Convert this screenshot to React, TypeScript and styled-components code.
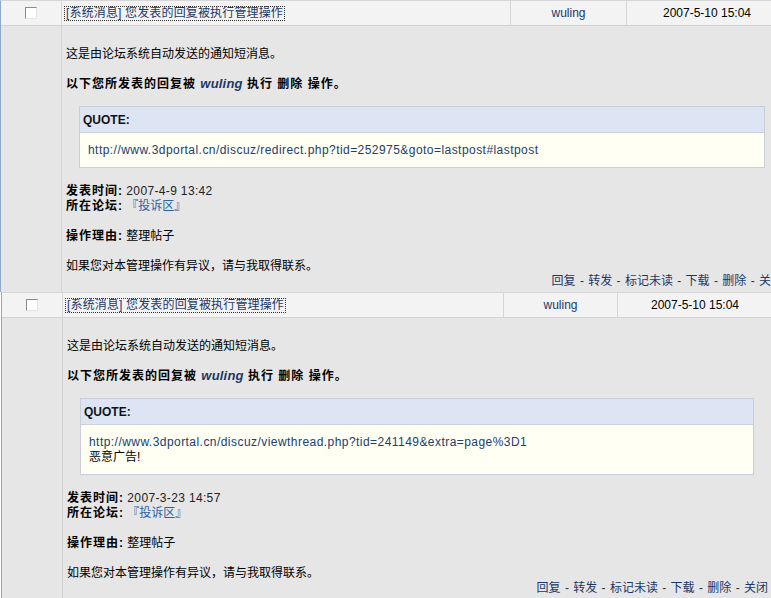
import React from 'react'
import styled, { createGlobalStyle } from 'styled-components'

const GlobalStyle = createGlobalStyle`
  html, body {
    margin: 0;
    padding: 0;
    overflow: hidden;
    background: #ffffff;
  }
  body {
    font-family: "Liberation Sans", "Noto Sans CJK SC", sans-serif;
    font-size: 12px;
    line-height: 15px;
    color: #000;
  }
`

const Table = styled.div<{ $width: number; $offset: number; $cols: string }>`
  display: grid;
  grid-template-columns: ${(p) => p.$cols};
  width: ${(p) => p.$width}px;
  margin-left: ${(p) => p.$offset}px;
  border-left: 1px solid #8fa8cc;
  border-top: 1px solid #d6d6d6;
  box-sizing: border-box;
  background: #e6e6e6;
`

const HeadCell = styled.div<{ $align?: string; $last?: boolean }>`
  height: 25px;
  display: flex;
  align-items: center;
  justify-content: ${(p) => p.$align || 'flex-start'};
  background: #f3f3f3;
  border-bottom: 1px solid #d2d2d2;
  border-right: ${(p) => (p.$last ? 'none' : '1px solid #d6d6d6')};
  padding: 0 3px;
  box-sizing: border-box;
  white-space: nowrap;
`

const Check = styled.span`
  display: block;
  width: 10px;
  height: 10px;
  margin: 0 auto;
  background: #fff;
  border-top: 1px solid #8a8a8a;
  border-left: 1px solid #8a8a8a;
  border-bottom: 1px solid #e4e4e4;
  border-right: 1px solid #e4e4e4;
`

const TitleLink = styled.a`
  color: #1b3768;
  text-decoration: none;
  outline: 1px dotted #333;
  padding: 0 1px;
  line-height: 13px;
  letter-spacing: 0.15px;
`

const Who = styled.span`
  color: #1b3768;
`

const SideCell = styled.div`
  border-right: 1px solid #d3d3d3;
`

const Content = styled.div`
  grid-column: 2 / -1;
  padding: 21px 4px 3px 4px;
`

const Line = styled.div<{ $gap?: boolean }>`
  margin-top: ${(p) => (p.$gap ? '15px' : '0')};
  height: 15px;
  white-space: nowrap;
`

const Strong = styled.b`
  font-weight: bold;
  letter-spacing: 1px;
`

const Actor = styled.b`
  color: #1b3768;
  font-style: italic;
  font-size: 13px;
  line-height: 12px;
  letter-spacing: 0.2px;
`

const Quote = styled.div<{ $right: number }>`
  margin: 14px ${(p) => p.$right}px 16px 13px;
  border: 1px solid #c9ced8;
  background: #fffff4;
`

const QuoteHead = styled.div`
  height: 25px;
  line-height: 26px;
  padding-left: 3px;
  background: #dde5f5;
  border-bottom: 1px solid #c9ced8;
  font-weight: bold;
  color: #111;
`

const QuoteBody = styled.div`
  padding: 10px 9px 9px 8px;
  color: #000;
`

const Url = styled.a`
  color: #20406e;
  text-decoration: none;
  display: block;
  letter-spacing: 0.45px;
`

const Forum = styled.a`
  color: #2f5fa0;
  text-decoration: none;
`

const Value = styled.span`
  color: #222;
  letter-spacing: 0.35px;
`

const Actions = styled.div`
  height: 15px;
  text-align: right;
  white-space: nowrap;
  color: #333;
`

const Sep = styled.span`
  padding: 0 1px;
`

const ActionLink = styled.a`
  color: #1b3768;
  text-decoration: none;
`

const messages = [
  {
    from: 'wuling',
    date: '2007-5-10 15:04',
    quote: ['http://www.3dportal.cn/discuz/redirect.php?tid=252975&goto=lastpost#lastpost'],
    posted: '2007-4-9 13:42',
    width: 787,
    offset: 0,
    cols: '61px 449px 116px 1fr',
    right: 18,
  },
  {
    from: 'wuling',
    date: '2007-5-10 15:04',
    quote: ['http://www.3dportal.cn/discuz/viewthread.php?tid=241149&extra=page%3D1', '恶意广告!'],
    posted: '2007-3-23 14:57',
    width: 771,
    offset: 1,
    cols: '61px 441px 114px 1fr',
    right: 14,
  },
]

const actions = ['回复', '转发', '标记未读', '下载', '删除', '关闭']

function Message({ msg }: { msg: (typeof messages)[number] }) {
  return (
    <Table $width={msg.width} $offset={msg.offset} $cols={msg.cols}>
      <HeadCell>
        <Check />
      </HeadCell>
      <HeadCell>
        <TitleLink href="#">[系统消息] 您发表的回复被执行管理操作</TitleLink>
      </HeadCell>
      <HeadCell $align="center">
        <Who>{msg.from}</Who>
      </HeadCell>
      <HeadCell $align="center" $last>
        {msg.date}
      </HeadCell>

      <SideCell />
      <Content>
        <Line>这是由论坛系统自动发送的通知短消息。</Line>
        <Line $gap>
          <Strong>以下您所发表的回复被 </Strong>
          <Actor>wuling</Actor>
          <Strong> 执行 删除 操作。</Strong>
        </Line>
        <Quote $right={msg.right}>
          <QuoteHead>QUOTE:</QuoteHead>
          <QuoteBody>
            {msg.quote.map((q, i) =>
              q.startsWith('http') ? (
                <Url key={i} href="#">
                  {q}
                </Url>
              ) : (
                <div key={i}>{q}</div>
              )
            )}
          </QuoteBody>
        </Quote>
        <Line>
          <Strong>发表时间:</Strong> <Value>{msg.posted}</Value>
        </Line>
        <Line>
          <Strong>所在论坛:</Strong> <Forum href="#">『投诉区』</Forum>
        </Line>
        <Line $gap>
          <Strong>操作理由:</Strong> 整理帖子
        </Line>
        <Line $gap>如果您对本管理操作有异议，请与我取得联系。</Line>
        <Actions>
          {actions.map((a, i) => (
            <React.Fragment key={a}>
              {i > 0 && <Sep> - </Sep>}
              <ActionLink href="#">{a}</ActionLink>
            </React.Fragment>
          ))}
        </Actions>
      </Content>
    </Table>
  )
}

export default function App() {
  return (
    <>
      <GlobalStyle />
      {messages.map((m, i) => (
        <Message key={i} msg={m} />
      ))}
    </>
  )
}
